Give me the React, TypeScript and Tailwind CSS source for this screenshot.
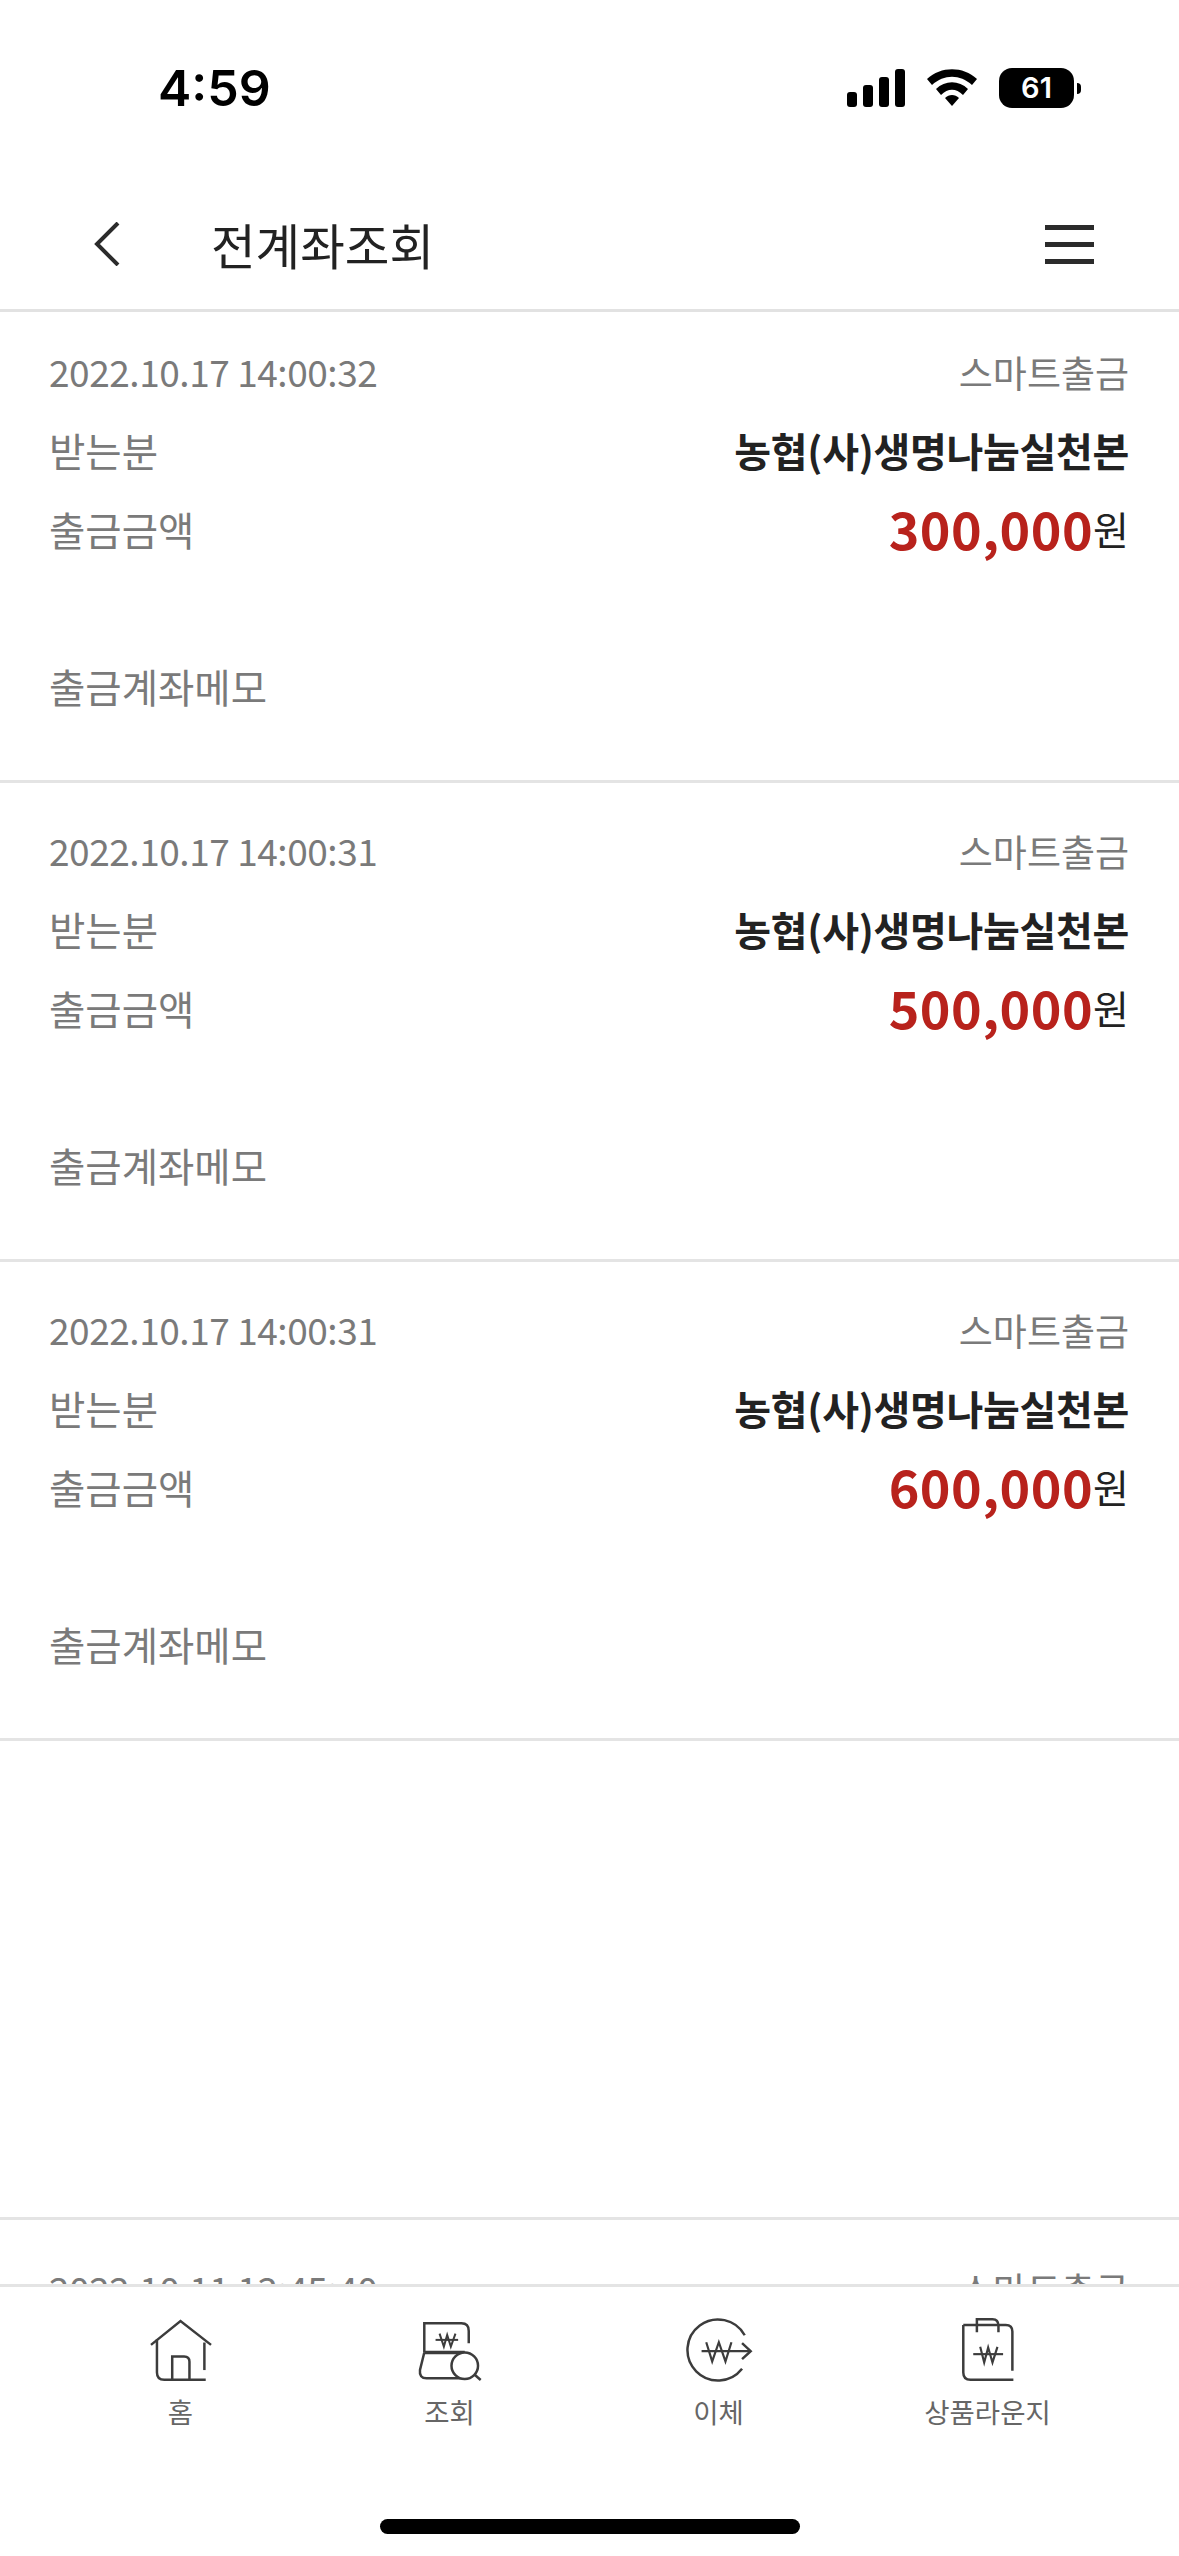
// App.tsx
const FONT = "font-['Noto_Sans_CJK_KR','Noto_Sans',sans-serif]";

const rows = [
  { date: "2022.10.17 14:00:32", amount: "300,000" },
  { date: "2022.10.17 14:00:31", amount: "500,000" },
  { date: "2022.10.17 14:00:31", amount: "600,000" },
];

// One withdrawal entry
const Row = ({ date, amount }: { date: string; amount: string }) => (
  <div className="h-[479px] shrink-0 border-b-[3px] border-[#e4e4e4] pt-[29px] pl-[49px] pr-[50px]">
    <div className="flex h-[78px] items-center justify-between text-[#7a7a7a]">
      <span className="text-[37px] tracking-[-0.45px]">{date}</span>
      <span className="pt-[2px] text-[37px]">스마트출금</span>
    </div>
    <div className="flex h-[78px] items-center justify-between">
      <span className="text-[39.5px] text-[#7a7a7a]">받는분</span>
      <span className="text-[40px] font-semibold tracking-[-0.3px] text-[#222222]">농협(사)생명나눔실천본</span>
    </div>
    <div className="flex h-[78px] items-center justify-between">
      <span className="pt-[2px] text-[39.5px] text-[#7a7a7a]">출금금액</span>
      <span className="flex items-center text-[39px] text-[#222222]">
        <span className="text-[52px] leading-none font-semibold tracking-[0.5px] text-[#b8221c]">{amount}</span>원
      </span>
    </div>
    <div className="mt-[80px] flex h-[78px] items-center text-[39.5px] text-[#7a7a7a]">출금계좌메모</div>
  </div>
);

const HomeIcon = () => (
  <svg width="68" height="68" viewBox="140 315 205 205" fill="none" stroke="#3c3c3c" strokeWidth="7.5">
    <path d="M152 402 L241 330 L333 402" />
    <path d="M170 385 V485 Q170 507 192 507 H317" />
    <path d="M313 395 V478" />
    <path d="M216 505 V437 H252 Q268 437 268 453 V505" />
  </svg>
);

const SearchIcon = () => (
  <svg width="68" height="68" viewBox="953 315 205 205" fill="none" stroke="#3c3c3c" strokeWidth="7.5">
    <path d="M978 425 V337 H1090 Q1112 337 1112 360 V397" />
    <path d="M1024 368 L1037 407 L1047 372 L1058 407 L1072 368" strokeWidth="6" />
    <path d="M1012 387 H1080" strokeWidth="6" />
    <path d="M978 425 H1100" strokeWidth="10" />
    <path d="M978 425 L965 478 Q962 503 985 503 H1100" />
    <circle cx="1100" cy="465" r="40" fill="#ffffff" />
    <path d="M1130 492 L1148 508" />
  </svg>
);

const TransferIcon = () => (
  <svg width="68" height="68" viewBox="258 318 205 205" fill="none" stroke="#3c3c3c" strokeWidth="7.5">
    <path d="M438 376 A92 92 0 1 0 430 477" />
    <path d="M322 397 L340 455 L360 397 L380 455 L398 397" strokeWidth="6.5" />
    <path d="M308 424 H455" strokeWidth="6.5" />
    <path d="M430 400 L456 424 L430 448" />
  </svg>
);

const BagIcon = () => (
  <svg width="68" height="68" viewBox="1064 315 205 205" fill="none" stroke="#3c3c3c" strokeWidth="7.5">
    <path d="M1092 342 H1220 Q1240 342 1240 362 V480" />
    <path d="M1092 342 V485 Q1092 507 1114 507 H1243" />
    <path d="M1133 364 V325 H1180 Q1198 325 1198 345 V364" />
    <path d="M1143 408 L1155 455 L1167 410 L1180 455 L1195 408" strokeWidth="6.5" />
    <path d="M1122 430 H1212" strokeWidth="6.5" />
  </svg>
);

const tabs = [
  { label: "홈", icon: <HomeIcon /> },
  { label: "조회", icon: <SearchIcon /> },
  { label: "이체", icon: <TransferIcon /> },
  { label: "상품라운지", icon: <BagIcon /> },
];

const App = () => {
  return (
    <div className={`flex h-[2556px] w-[1179px] flex-col overflow-hidden bg-white ${FONT}`}>
      {/* status bar */}
      <div className="flex h-[176px] shrink-0 items-center justify-between pl-[158px] pr-[98px]">
        <span className="font-['Inter',sans-serif] text-[50px] font-semibold text-black">4:59</span>
        <div className="flex items-center">
          <svg width="58" height="38" viewBox="0 0 58 38" fill="#000000">
            <rect x="0" y="23" width="10" height="15" rx="3" />
            <rect x="16" y="16" width="10" height="22" rx="3" />
            <rect x="32" y="8" width="10" height="30" rx="3" />
            <rect x="48" y="0" width="10" height="38" rx="3" />
          </svg>
          <svg className="ml-[22px]" width="50" height="38" viewBox="0 0 50 38" fill="#000000">
            <path d="M0 10 C14 -3 36 -3 50 10 L45 16 C33 5 17 5 5 16 Z" />
            <path d="M9 20 C18 11 32 11 41 20 L36 26 C29 19 21 19 14 26 Z" />
            <path d="M18 29 C22 25 28 25 32 29 L25 37 Z" />
          </svg>
          <div className="ml-[22px] flex h-[40px] w-[75px] items-center justify-center rounded-[13px] bg-black font-['Inter',sans-serif] text-[29px] font-semibold text-white">
            61
          </div>
          <div className="ml-[3px] h-[11px] w-[4px] rounded-r-full bg-black" />
        </div>
      </div>

      {/* title bar */}
      <div className="relative z-10 flex h-[136px] shrink-0 items-center justify-between border-b-[3px] border-[#e2e2e2] bg-white pt-[3px] pl-[94px] pr-[85px]">
        <div className="flex items-center">
          <svg width="26" height="44" viewBox="0 0 26 44" fill="none" stroke="#2b2b2b" strokeWidth="4">
            <path d="M24 1 L3 22 L24 43" />
          </svg>
          <h1 className="ml-[91px] text-[48.5px] font-normal text-[#222222]">전계좌조회</h1>
        </div>
        <div className="flex w-[49px] flex-col gap-[12px]">
          <div className="h-[5px] bg-[#2b2b2b]" />
          <div className="h-[5px] bg-[#2b2b2b]" />
          <div className="h-[5px] bg-[#2b2b2b]" />
        </div>
      </div>

      {/* list, scrolled a little: the first entry is cut by the title bar and the last runs under the tab bar */}
      <div className="min-h-0 flex-1 overflow-hidden">
        <div className="-mt-[8px]">
          {rows.map((row, i) => (
            <Row key={i} date={row.date} amount={row.amount} />
          ))}
          <div className="h-[479px] border-b-[3px] border-[#e4e4e4]" />
          <div className="flex h-[84px] items-center justify-between pl-[49px] pr-[50px] pt-[54px] text-[#7a7a7a]">
            <span className="text-[37px] tracking-[-0.45px]">2022.10.11 13:45:40</span>
            <span className="pt-[2px] text-[37px]">스마트출금</span>
          </div>
        </div>
      </div>

      {/* tab bar */}
      <div className="relative h-[272px] shrink-0 border-t-[3px] border-[#e4e4e4] bg-white">
        <div className="grid grid-cols-4 pt-[29px] pl-[46px] pr-[57px]">
          {tabs.map((tab) => (
            <div key={tab.label} className="flex flex-col items-center">
              {tab.icon}
              <span className="mt-[7px] text-[27.5px] leading-[40px] text-[#666666]">{tab.label}</span>
            </div>
          ))}
        </div>
        <div className="mx-auto mt-[88px] h-[15px] w-[420px] rounded-full bg-black" />
      </div>
    </div>
  );
};

export default App;
